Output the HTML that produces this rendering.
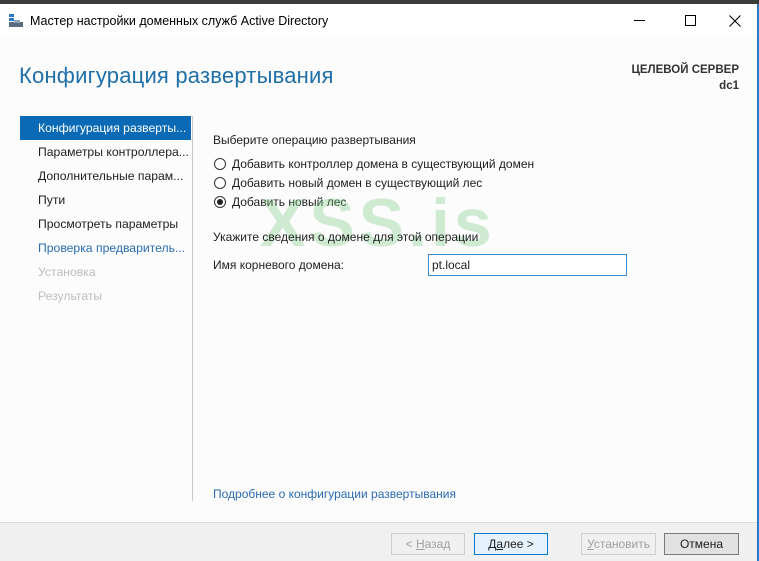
<!DOCTYPE html>
<html><head><meta charset="utf-8"><style>
*{margin:0;padding:0;box-sizing:border-box}
body{width:759px;height:561px;overflow:hidden;background:#fcfcfc;font-family:"Liberation Sans",sans-serif;font-size:12px;color:#1e1e1e;position:relative}
.a{position:absolute;white-space:nowrap}
.nav{left:38px;font-size:12.2px}
.t{font-size:12px}
.btn{position:absolute;top:533px;height:22px;border:1px solid #adadad;background:#e1e1e1;text-align:center;line-height:20px;font-size:12px}
.r{width:12px;height:12px;border:1px solid #333;border-radius:50%;background:#fff;position:absolute;left:214px}
</style></head><body>
<div class="a" style="left:0;top:0;width:759px;height:4px;background:#3c3c3c"></div>
<div class="a" style="left:0;top:4px;width:759px;height:33px;background:#fff"></div>
<div class="a" style="left:757px;top:4px;width:2px;height:557px;background:#2b79c7"></div>
<svg class="a" style="left:8px;top:14px" width="16" height="14"><rect x="1" y="0" width="5" height="3" fill="#2b79c7"/><rect x="1" y="4" width="5" height="3" fill="#2b79c7"/><rect x="1" y="8" width="14" height="5" fill="#5a6b80"/><rect x="6" y="6" width="6" height="3" fill="#8fa2b8"/></svg>
<div class="a" style="left:30px;top:14px;font-size:12.5px;color:#000">Мастер настройки доменных служб Active Directory</div>
<div class="a" style="left:634px;top:20px;width:11px;height:1px;background:#000"></div>
<div class="a" style="left:685px;top:15px;width:11px;height:11px;border:1px solid #000"></div>
<svg class="a" style="left:729px;top:15px" width="12" height="12"><path d="M0.5 0.5L11.5 11.5M11.5 0.5L0.5 11.5" stroke="#000" stroke-width="1.1"/></svg>
<div class="a" style="left:19px;top:63px;font-size:22px;color:#1f6fa8;letter-spacing:0.2px">Конфигурация развертывания</div>
<div class="a" style="right:20px;top:62px;font-size:11.5px;font-weight:bold;color:#333;text-align:right;line-height:16px">ЦЕЛЕВОЙ СЕРВЕР<br>dc1</div>
<div class="a" style="left:20px;top:116px;width:171px;height:24px;background:#0b6ab5"></div>
<div class="a" style="left:192px;top:116px;width:1px;height:385px;background:#c8c8c8"></div>
<div class="a nav" style="top:121px;color:#fff">Конфигурация разверты...</div>
<div class="a nav" style="top:145px">Параметры контроллера...</div>
<div class="a nav" style="top:169px">Дополнительные парам...</div>
<div class="a nav" style="top:193px">Пути</div>
<div class="a nav" style="top:217px">Просмотреть параметры</div>
<div class="a nav" style="top:241px;color:#2a6bb2">Проверка предваритель...</div>
<div class="a nav" style="top:265px;color:#bdbdbd">Установка</div>
<div class="a nav" style="top:289px;color:#bdbdbd">Результаты</div>
<div class="a t" style="left:213px;top:133px">Выберите операцию развертывания</div>
<div class="r" style="top:158px"></div><div class="a t" style="left:232px;top:157px">Добавить контроллер домена в существующий домен</div>
<div class="r" style="top:177px"></div><div class="a t" style="left:232px;top:176px">Добавить новый домен в существующий лес</div>
<div class="r" style="top:196px"><div style="width:6px;height:6px;border-radius:50%;background:#222;margin:2px"></div></div><div class="a t" style="left:232px;top:195px">Добавить новый лес</div>
<div class="a" style="left:260px;top:184px;font-size:68px;font-weight:bold;color:rgba(120,200,130,0.35);letter-spacing:4px">XSS.is</div>
<div class="a t" style="left:213px;top:230px">Укажите сведения о домене для этой операции</div>
<div class="a t" style="left:213px;top:258px">Имя корневого домена:</div>
<div class="a t" style="left:428px;top:254px;width:199px;height:22px;border:1px solid #3c8ad6;background:#fff;padding:3px 3px">pt.local</div>
<div class="a t" style="left:213px;top:487px;color:#2a6bb2">Подробнее о конфигурации развертывания</div>
<div class="a" style="left:0;top:522px;width:757px;height:39px;background:#f0f0f0;border-top:1px solid #dadada"></div>
<div class="btn" style="left:391px;width:74px;color:#a0a0a0;border-color:#cfcfcf;background:#f0f0f0">&lt; <u>Н</u>азад</div>
<div class="btn" style="left:474px;width:74px;border-color:#0078d7;background:#e5f1fb">Д<u>а</u>лее &gt;</div>
<div class="btn" style="left:581px;width:75px;color:#a0a0a0;border-color:#cfcfcf;background:#f0f0f0"><u>У</u>становить</div>
<div class="btn" style="left:664px;width:75px;border-color:#7a7a7a">Отмена</div>
</body></html>
